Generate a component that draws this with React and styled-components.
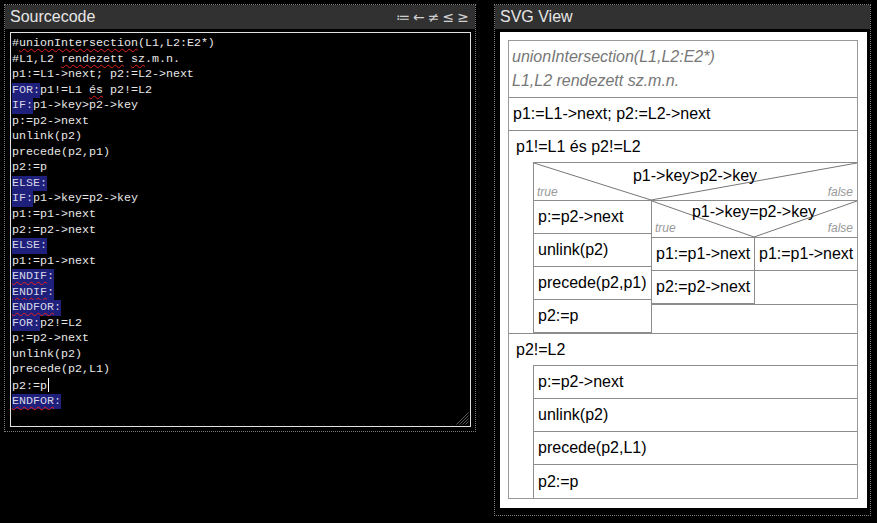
import styled, { createGlobalStyle, css } from "styled-components";

const GlobalStyle = createGlobalStyle`
  html, body {
    margin: 0;
    padding: 0;
    background: #000;
  }
  body {
    font-family: "Liberation Sans", Arial, sans-serif;
  }
  * {
    box-sizing: border-box;
  }
`;

const LINE = "#8c8c8c";

const Page = styled.div`
  display: flex;
  align-items: flex-start;
  gap: 18px;
  padding: 4px 0 0 4px;
`;

const Panel = styled.section`
  width: ${(p) => p.$w}px;
  height: ${(p) => p.$h}px;
  border: 1px dotted #7a7a7a;
  display: flex;
  flex-direction: column;
`;

const PanelHeader = styled.header`
  height: 24px;
  flex-shrink: 0;
  background: #313131;
  color: #e6e6e6;
  font-size: 16px;
  display: flex;
  align-items: center;
  justify-content: space-between;
  padding: 0 6px 0 5px;
`;

const Tools = styled.div`
  display: flex;
  gap: 3px;
  color: #d0d0d0;
  font-family: "DejaVu Sans", sans-serif;
  font-size: 14px;
`;

const PanelBody = styled.div`
  flex: 1;
  display: flex;
  padding: ${(p) => p.$pad};
`;

/* ---------- source editor ---------- */

const Editor = styled.div`
  position: relative;
  flex: 1;
  border: 1px solid #e2e2e2;
  background: #000;
  padding: 3px 1px 2px;
  font-family: "Liberation Mono", monospace;
  font-size: 11.67px;
  color: #e8e8e8;
  white-space: pre;
`;

const CodeLine = styled.div`
  height: 15.55px;
  line-height: 15.55px;
`;

const Kw = styled.span`
  display: inline-block;
  background: #1f1f7c;
  color: #d6d6e6;
`;

const Typo = styled.span`
  text-decoration: underline wavy #e52020;
  text-decoration-thickness: 1px;
  text-underline-offset: 2px;
  text-decoration-skip-ink: none;
`;

const Caret = styled.span`
  display: inline-block;
  width: 1px;
  height: 14px;
  margin-left: 1px;
  background: #fff;
  vertical-align: -3px;
`;

const Grip = styled.svg`
  position: absolute;
  right: 1px;
  bottom: 1px;
`;

/* ---------- structogram ---------- */

const Canvas = styled.div`
  flex: 1;
  background: #fff;
  padding: 8px;
`;

const Diagram = styled.div`
  width: 350px;
  border: 1px solid #999;
  display: flex;
  flex-direction: column;
  font-family: "Liberation Sans", Arial, sans-serif;
  font-size: 16px;
  color: #000;
  & > :last-child {
    border-bottom: none;
  }
`;

const Seq = styled.div`
  display: flex;
  flex-direction: column;
  min-width: 0;
  ${(p) => (p.$w ? css`width: ${p.$w}px; flex-shrink: 0;` : css`flex: 1;`)}
  ${(p) => p.$left && css`border-left: 1px solid ${LINE};`}
  ${(p) => p.$top && css`border-top: 1px solid ${LINE};`}
  ${(p) =>
    !p.$keepLast &&
    css`
      & > :last-child {
        border-bottom: none;
      }
    `}
`;

const Comment = styled.div`
  height: 57px;
  padding: 4px 0 0 3px;
  border-bottom: 1px solid ${LINE};
  font-style: italic;
  color: #777;
  line-height: 24px;
`;

const Stmt = styled.div`
  height: 33px;
  flex-shrink: 0;
  display: flex;
  align-items: center;
  padding-left: 4px;
  white-space: nowrap;
  border-bottom: 1px solid ${LINE};
`;

const Loop = styled.div`
  display: flex;
  flex-direction: column;
  border-bottom: 1px solid ${LINE};
`;

const LoopHead = styled.div`
  height: 31px;
  display: flex;
  align-items: center;
  padding-left: 7px;
`;

const LoopBody = styled.div`
  display: flex;
  padding-left: 24px;
`;

const If = styled.div`
  display: flex;
  flex-direction: column;
  border-bottom: 1px solid ${LINE};
`;

const Cond = styled.div`
  position: relative;
  height: ${(p) => p.$h}px;
  flex-shrink: 0;
  border-bottom: 1px solid ${LINE};
  display: flex;
  flex-direction: column;
  justify-content: space-between;
  padding: ${(p) => p.$pt}px 4px 2px 3px;
`;

const Diag = styled.svg`
  position: absolute;
  inset: 0;
  width: 100%;
  height: 100%;
  overflow: visible;
`;

const CondText = styled.div`
  position: relative;
  text-align: center;
  line-height: 18px;
  white-space: nowrap;
`;

const Labels = styled.div`
  position: relative;
  display: flex;
  justify-content: space-between;
  font-size: 12px;
  font-style: italic;
  color: #999;
  line-height: 14px;
`;

const Branches = styled.div`
  display: flex;
  flex: 1;
`;

function IfBlock({ cond, split, h, pt, yes, no }) {
  return (
    <If>
      <Cond $h={h} $pt={pt}>
        <Diag>
          <line x1="0" y1="0" x2={split} y2="100%" stroke="#777" strokeWidth="1" />
          <line x1={split} y1="100%" x2="100%" y2="0" stroke="#777" strokeWidth="1" />
        </Diag>
        <CondText>{cond}</CondText>
        <Labels>
          <span>true</span>
          <span>false</span>
        </Labels>
      </Cond>
      <Branches>
        <Seq $w={split} $keepLast>
          {yes}
        </Seq>
        <Seq $left $keepLast>
          {no}
        </Seq>
      </Branches>
    </If>
  );
}

const code = [
  [["", "#"], ["typo", "unionIntersection"], ["", "(L1,L2:E2*)"]],
  [["", "#L1,L2 "], ["typo", "rendezett"], ["", " "], ["typo", "sz"], ["", ".m.n."]],
  [["", "p1:=L1->next; p2:=L2->next"]],
  [["kw", "FOR:"], ["", "p1!=L1 "], ["typo", "és"], ["", " p2!=L2"]],
  [["kw", "IF:"], ["", "p1->key>p2->key"]],
  [["", "p:=p2->next"]],
  [["", "unlink(p2)"]],
  [["", "precede(p2,p1)"]],
  [["", "p2:=p"]],
  [["kw", "ELSE:"]],
  [["kw", "IF:"], ["", "p1->key=p2->key"]],
  [["", "p1:=p1->next"]],
  [["", "p2:=p2->next"]],
  [["kw", "ELSE:"]],
  [["", "p1:=p1->next"]],
  [["kwtypo", "ENDIF", ":"]],
  [["kwtypo", "ENDIF", ":"]],
  [["kwtypo", "ENDFOR", ":"]],
  [["kw", "FOR:"], ["", "p2!=L2"]],
  [["", "p:=p2->next"]],
  [["", "unlink(p2)"]],
  [["", "precede(p2,L1)"]],
  [["", "p2:=p"], ["caret", ""]],
  [["kwtypo", "ENDFOR", ":"]],
];

function Segment({ seg }) {
  const [kind, text, rest] = seg;
  if (kind === "kw") return <Kw>{text}</Kw>;
  if (kind === "typo") return <Typo>{text}</Typo>;
  if (kind === "kwtypo")
    return (
      <Kw>
        <Typo>{text}</Typo>
        {rest}
      </Kw>
    );
  if (kind === "caret") return <Caret />;
  return <span>{text}</span>;
}

export default function App() {
  return (
    <>
      <GlobalStyle />
      <Page>
        <Panel $w={472} $h={428}>
          <PanelHeader>
            <span>Sourcecode</span>
            <Tools>
              <span>≔</span>
              <span>←</span>
              <span>≠</span>
              <span>≤</span>
              <span>≥</span>
            </Tools>
          </PanelHeader>
          <PanelBody $pad="3px 4px 4px 5px">
            <Editor>
              {code.map((line, i) => (
                <CodeLine key={i}>
                  {line.map((seg, j) => (
                    <Segment key={j} seg={seg} />
                  ))}
                </CodeLine>
              ))}
              <Grip width="13" height="13" viewBox="0 0 13 13">
                <g stroke="#5a5a5a" strokeWidth="1">
                  <line x1="12.5" y1="0.5" x2="0.5" y2="12.5" />
                  <line x1="12.5" y1="3.5" x2="3.5" y2="12.5" />
                  <line x1="12.5" y1="6.5" x2="6.5" y2="12.5" />
                  <line x1="12.5" y1="9.5" x2="9.5" y2="12.5" />
                </g>
              </Grip>
            </Editor>
          </PanelBody>
        </Panel>

        <Panel $w={377} $h={512}>
          <PanelHeader>
            <span>SVG View</span>
          </PanelHeader>
          <PanelBody $pad="3px 3px 7px 5px">
            <Canvas>
              <Diagram>
                <Comment>
                  <div>unionIntersection(L1,L2:E2*)</div>
                  <div>L1,L2 rendezett sz.m.n.</div>
                </Comment>
                <Stmt>p1:=L1-&gt;next; p2:=L2-&gt;next</Stmt>
                <Loop>
                  <LoopHead>p1!=L1 és p2!=L2</LoopHead>
                  <LoopBody>
                    <Seq $left $top>
                      <IfBlock
                        cond="p1->key>p2->key"
                        split={117}
                        h={38}
                        pt={4}
                        yes={
                          <>
                            <Stmt>p:=p2-&gt;next</Stmt>
                            <Stmt>unlink(p2)</Stmt>
                            <Stmt>precede(p2,p1)</Stmt>
                            <Stmt>p2:=p</Stmt>
                          </>
                        }
                        no={
                          <IfBlock
                            cond="p1->key=p2->key"
                            split={102}
                            h={37}
                            pt={2}
                            yes={
                              <>
                                <Stmt>p1:=p1-&gt;next</Stmt>
                                <Stmt>p2:=p2-&gt;next</Stmt>
                              </>
                            }
                            no={<Stmt>p1:=p1-&gt;next</Stmt>}
                          />
                        }
                      />
                    </Seq>
                  </LoopBody>
                </Loop>
                <Loop>
                  <LoopHead>p2!=L2</LoopHead>
                  <LoopBody>
                    <Seq $left $top>
                      <Stmt>p:=p2-&gt;next</Stmt>
                      <Stmt>unlink(p2)</Stmt>
                      <Stmt>precede(p2,L1)</Stmt>
                      <Stmt>p2:=p</Stmt>
                    </Seq>
                  </LoopBody>
                </Loop>
              </Diagram>
            </Canvas>
          </PanelBody>
        </Panel>
      </Page>
    </>
  );
}
